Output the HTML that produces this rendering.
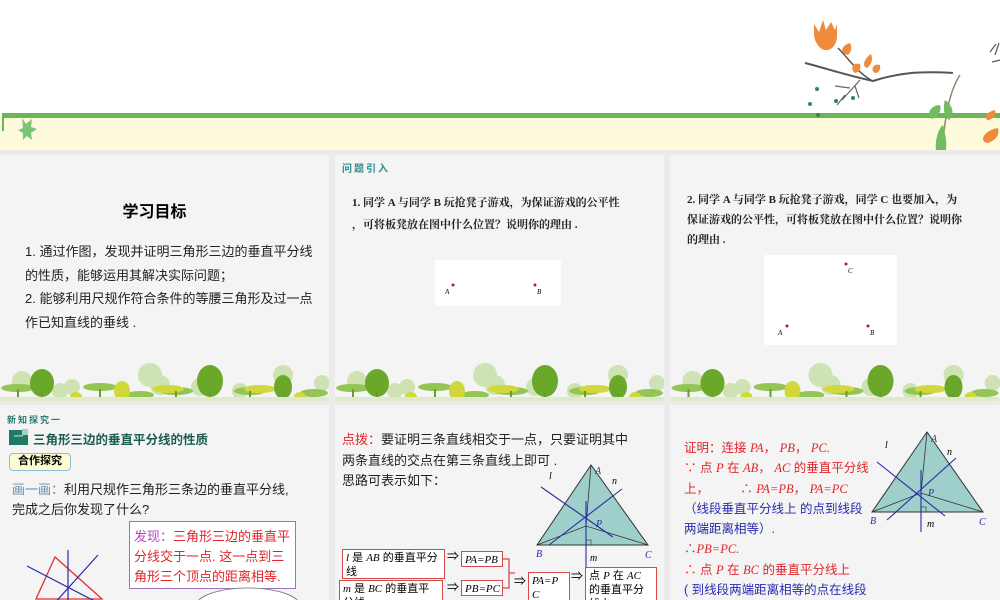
<!DOCTYPE html>
<html><head><meta charset="utf-8"><style>
*{margin:0;padding:0;box-sizing:border-box}
body{width:1000px;height:600px;overflow:hidden;background:#ebebeb;position:relative;font-family:"Liberation Sans","Noto Sans CJK SC",sans-serif}
.a{position:absolute;white-space:nowrap}
.p{position:absolute;background:#f4f4f4;overflow:hidden}
.serif{font-family:"Liberation Serif","Noto Serif CJK SC",serif}
.red{color:#e0262b}
.box{position:absolute;border:1.5px solid #d24a4a;background:#fff;font-size:11px;line-height:14px;padding:1px 3px;white-space:normal}
i{font-family:"Liberation Serif",serif}
</style></head><body>
<svg width="0" height="0" style="position:absolute">
<defs>
<symbol id="trees" viewBox="0 0 329 40">
<g fill="#cfe2b3">
<circle cx="22" cy="20" r="10"/><circle cx="150" cy="14" r="12"/><circle cx="160" cy="24" r="10"/><circle cx="283" cy="14" r="10"/><circle cx="72" cy="26" r="8"/><circle cx="322" cy="22" r="8"/><circle cx="200" cy="26" r="9"/><circle cx="60" cy="30" r="8"/><circle cx="240" cy="30" r="8"/>
</g>
<g fill="#94c453">
<ellipse cx="18" cy="27" rx="17" ry="4"/><ellipse cx="100" cy="26" rx="17" ry="4"/><ellipse cx="176" cy="30" rx="17" ry="4"/><ellipse cx="250" cy="30" rx="16" ry="4"/><ellipse cx="314" cy="32" rx="14" ry="4"/><ellipse cx="140" cy="34" rx="14" ry="4"/>
</g>
<g fill="#d0d83a"><ellipse cx="122" cy="30" rx="8" ry="10"/><ellipse cx="168" cy="28" rx="16" ry="4"/><ellipse cx="260" cy="28" rx="16" ry="4"/><ellipse cx="76" cy="36" rx="6" ry="5"/><ellipse cx="300" cy="36" rx="6" ry="5"/></g>
<g fill="#6aa82a">
<ellipse cx="42" cy="22" rx="12" ry="14"/><ellipse cx="210" cy="20" rx="13" ry="16"/><ellipse cx="283" cy="26" rx="9" ry="12"/>
</g>
<g stroke="#6a9a30" stroke-width="2"><path d="M42 30V40M210 30V40M283 32V40M18 28V40M100 28V40M176 30V40M250 30V40"/></g>
<rect x="0" y="36" width="329" height="4" fill="#dfeacc"/>
</symbol>
</defs></svg>

<div class="a" style="left:0;top:0;width:1000px;height:150px;background:#fff"></div>
<div class="a" style="left:0;top:116px;width:1000px;height:34px;background:#fdfbdc"></div>
<div class="a" style="left:2px;top:113px;width:998px;height:5px;background:#6db559"></div>
<div class="a" style="left:2px;top:113px;width:2px;height:18px;background:#6db559"></div>
<svg class="a" style="left:0;top:0" width="1000" height="150">
<path d="M22 118l4 6 6-5-1 8 6 2-6 4 1 7-5-4-4 4v-7l-5-3 5-2z" fill="#7cc477"/>
<path d="M805 63c20 5 40 12 68 18 25-8 45-10 80-8" stroke="#555" stroke-width="2" fill="none"/>
<path d="M838 48c10 10 20 25 33 32" stroke="#555" stroke-width="1.5" fill="none"/>
<path d="M860 80l-18 20M850 88l-15-2M845 95l-8 10M855 86l4 12" stroke="#666" stroke-width="1.2"/>
<g fill="#2e8b4a"><circle cx="810" cy="104" r="2"/><circle cx="836" cy="101" r="2"/><circle cx="817" cy="89" r="2"/><circle cx="853" cy="98" r="2"/><circle cx="818" cy="115" r="2"/></g>
<g fill="#ef8b3d">
<path d="M814 24l5 8 4-12 3 10 5-8 4 8 2-6v12c0 9-6 15-12 14s-11-9-11-16z"/>
<path d="M850 43c-8 2-12 10-2 12 4-4 4-8 2-12z"/>
<path d="M871 54c-6 4-10 12-4 14 5-4 6-9 4-14z"/>
<path d="M860 64c-8-2-10 6-5 9 5-1 6-5 5-9z"/>
<path d="M880 65c-7-2-10 5-5 8 4 0 6-4 5-8z"/>
<path d="M995 110c-10 2-12 10-6 10 5-2 7-5 6-10zM998 128c-14 2-20 14-10 15 8-3 12-8 10-15z"/>
</g>
<path d="M960 75c-10 15-15 40-18 75" stroke="#8a8a6a" stroke-width="1.5" fill="none"/>
<g fill="#72bb5e"><path d="M940 105c-8 0-15 8-8 14 6-2 10-8 8-14z"/><path d="M945 100c8 5 10 15 4 20-6-5-6-14-4-20z"/><path d="M943 125c-6 5-8 18-7 25h10c1-8-1-18-3-25z"/></g>
<path d="M990 52l6-8M995 55l4-12M992 62l8-2" stroke="#556" stroke-width="1.2"/>
</svg>

<div class="p" style="left:0;top:155px;width:329px;height:246px">
<div class="a" style="left:0;width:309px;text-align:center;top:43px;font-size:16px;font-weight:bold">学习目标</div>
<div class="a" style="left:25px;top:85px;font-size:13px;line-height:23.5px;color:#222">1. 通过作图，发现并证明三角形三边的垂直平分线<br>的性质，能够运用其解决实际问题；<br>2. 能够利用尺规作符合条件的等腰三角形及过一点<br>作已知直线的垂线 .</div>
<svg class="a" style="left:0;top:206px" width="329" height="40"><use href="#trees"/></svg>
</div>
<div class="p" style="left:335px;top:155px;width:329px;height:246px">
<div class="a" style="left:7px;top:5px;font-size:10px;color:#2a8c8c;font-weight:bold;letter-spacing:2px">问题引入</div>
<div class="a serif" style="left:17px;top:37px;font-size:11px;line-height:22px;font-weight:bold;color:#222">1. 同学 A 与同学 B 玩抢凳子游戏，为保证游戏的公平性<br>，可将板凳放在图中什么位置？说明你的理由 .</div>
<div class="a" style="left:100px;top:105px;width:126px;height:46px;background:#fff"></div>
<svg class="a" style="left:100px;top:105px" width="126" height="46"><circle cx="18" cy="25" r="1.5" fill="#a22"/><circle cx="100" cy="25" r="1.5" fill="#a22"/><text x="10" y="34" font-size="7" font-style="italic" font-family="Liberation Serif">A</text><text x="102" y="34" font-size="7" font-style="italic" font-family="Liberation Serif">B</text></svg>
<svg class="a" style="left:0;top:206px" width="329" height="40"><use href="#trees"/></svg>
</div>
<div class="p" style="left:670px;top:155px;width:330px;height:246px">
<div class="a serif" style="left:17px;top:35px;font-size:11px;line-height:20px;font-weight:bold;color:#222">2. 同学 A 与同学 B 玩抢凳子游戏，同学 C 也要加入，为<br>保证游戏的公平性，可将板凳放在图中什么位置？说明你<br>的理由 .</div>
<div class="a" style="left:94px;top:100px;width:133px;height:90px;background:#fff"></div>
<svg class="a" style="left:94px;top:100px" width="133" height="90"><circle cx="82" cy="9" r="1.5" fill="#a22"/><circle cx="23" cy="71" r="1.5" fill="#a22"/><circle cx="104" cy="71" r="1.5" fill="#a22"/><text x="84" y="18" font-size="7" font-style="italic" font-family="Liberation Serif">C</text><text x="14" y="80" font-size="7" font-style="italic" font-family="Liberation Serif">A</text><text x="106" y="80" font-size="7" font-style="italic" font-family="Liberation Serif">B</text></svg>
<svg class="a" style="left:0;top:206px" width="330" height="40"><use href="#trees"/></svg>
</div>

<div class="p" style="left:0;top:405px;width:329px;height:195px">
<div class="a" style="left:7px;top:8px;font-size:9px;color:#2a7c6c;font-weight:bold;letter-spacing:2px">新知探究一</div>
<div class="a" style="left:9px;top:25px;width:19px;height:15px;background:#1e7a66;color:#fff;font-size:10px;text-align:center;line-height:15px">一</div>
<div class="a" style="left:22px;top:24px;width:6px;height:6px;background:#9fd3c4"></div>
<div class="a" style="left:33px;top:24px;font-size:12.5px;font-weight:bold;color:#1c5c52">三角形三边的垂直平分线的性质</div>
<div class="a" style="left:9px;top:48px;width:62px;height:18px;background:#fdfbd0;border:1.5px solid #8cc0d8;border-radius:4px;font-size:11px;font-weight:bold;text-align:center;line-height:15px">合作探究</div>
<div class="a" style="left:12px;top:75px;font-size:13px;line-height:20px;color:#222"><span style="color:#6a8aa8">画一画：</span>利用尺规作三角形三条边的垂直平分线,<br>完成之后你发现了什么?</div>
<div class="a" style="left:129px;top:116px;width:167px;height:68px;background:#fff;border:1.5px solid #a070c0;padding:5px 0 0 4px;font-size:13px;line-height:20px;color:#e0262b;white-space:normal"><span style="color:#c040c0">发现：</span>三角形三边的垂直平分线交于一点. 这一点到三角形三个顶点的距离相等.</div>
<svg class="a" style="left:0;top:135px" width="329" height="60"><path d="M55 17L36 59L102 59Z" fill="none" stroke="#d33" stroke-width="1.3"/><path d="M68 10V65M27 26L104 66M52 66L98 15" stroke="#2a2aa8" stroke-width="1.2"/><ellipse cx="248" cy="66" rx="52" ry="18" fill="#fff" stroke="#888"/><path d="M195 62c5-2 10-2 12 0" stroke="#888" fill="none"/></svg>
</div>

<div class="p" style="left:335px;top:405px;width:329px;height:195px">
<div class="a" style="left:7px;top:25px;font-size:13px;line-height:20.5px;color:#222"><span class="red">点拨：</span>要证明三条直线相交于一点，只要证明其中<br>两条直线的交点在第三条直线上即可 .<br>思路可表示如下：</div>
<svg class="a" style="left:190px;top:52px" width="139" height="143"><path d="M66 8L12 88L123 88Z" fill="#9fcfca" stroke="#333" stroke-width="1"/><path d="M66 8L61 69M12 88L61 69L123 88" stroke="#333" stroke-width="0.8" fill="none"/><path d="M16 30L88 80M24 88L97 32M61 44V140" stroke="#2a2aa8" stroke-width="1.1"/><rect x="61" y="83" width="5" height="5" fill="none" stroke="#333" stroke-width="0.6"/><g font-family="Liberation Serif" font-style="italic" font-size="10"><text x="70" y="17" fill="#2a2aa8">A</text><text x="11" y="100" fill="#2a2aa8">B</text><text x="120" y="101" fill="#2a2aa8">C</text><text x="71" y="70" fill="#2a2aa8">P</text><text x="24" y="22">l</text><text x="87" y="27">n</text><text x="65" y="104">m</text></g></svg>
<div class="box" style="left:7px;top:144px;width:103px;height:30px"><i>l</i> 是 <i>AB</i> 的垂直平分线</div>
<div class="box" style="left:4px;top:175px;width:104px;height:30px"><i>m</i> 是 <i>BC</i> 的垂直平分线</div>
<div class="box" style="left:126px;top:146px;width:42px;height:16px"><i>PA=PB</i></div>
<div class="box" style="left:126px;top:175px;width:42px;height:16px"><i>PB=PC</i></div>
<div class="box" style="left:193px;top:167px;width:42px;height:30px"><i>PA=P C</i></div>
<div class="box" style="left:250px;top:162px;width:72px;height:40px">点 <i>P</i> 在 <i>AC</i> 的垂直平分线上</div>
<div class="a" style="left:112px;top:142px;font-size:12px">⇒</div>
<div class="a" style="left:112px;top:173px;font-size:12px">⇒</div>
<div class="a" style="left:179px;top:167px;font-size:12px">⇒</div>
<div class="a" style="left:236px;top:162px;font-size:12px">⇒</div>
<svg class="a" style="left:168px;top:150px" width="12" height="40"><path d="M0 4H6V33H0M6 18H12" stroke="#d24a4a" stroke-width="1.3" fill="none"/></svg>
</div>

<div class="p" style="left:670px;top:405px;width:330px;height:195px">
<div class="a" style="left:14px;top:33px;font-size:12.5px;line-height:20.3px;color:#e0262b">证明：连接 <i>PA</i>， <i>PB</i>， <i>PC.</i><br>∵ 点 <i>P</i> 在 <i>AB</i>， <i>AC</i> 的垂直平分线<br>上，&nbsp;&nbsp;&nbsp;&nbsp;&nbsp;&nbsp;&nbsp;&nbsp;&nbsp;∴ <i>PA=PB</i>， <i>PA=PC</i><br><span style="color:#2a2ab0">（线段垂直平分线上 的点到线段<br>两端距离相等）.</span><br>∴<i>PB=PC.</i><br>∴ 点 <i>P</i> 在 <i>BC</i> 的垂直平分线上<br><span style="color:#2a2ab0">( 到线段两端距离相等的点在线段</span></div>
<svg class="a" style="left:195px;top:15px" width="135" height="120"><path d="M62 12L7 92L118 92Z" fill="#9fcfca" stroke="#333" stroke-width="1"/><path d="M62 12L56 73M7 92L56 73L118 92" stroke="#333" stroke-width="0.8" fill="none"/><path d="M12 42L80 96M22 100L91 38M56 50V112" stroke="#2a2aa8" stroke-width="1.1"/><rect x="56" y="87" width="5" height="5" fill="none" stroke="#333" stroke-width="0.6"/><g font-family="Liberation Serif" font-style="italic" font-size="10"><text x="66" y="22" fill="#2a2aa8">A</text><text x="5" y="104" fill="#2a2aa8">B</text><text x="114" y="105" fill="#2a2aa8">C</text><text x="63" y="76" fill="#2a2aa8">P</text><text x="20" y="28">l</text><text x="82" y="35">n</text><text x="62" y="107">m</text></g></svg>
</div>
</body></html>
